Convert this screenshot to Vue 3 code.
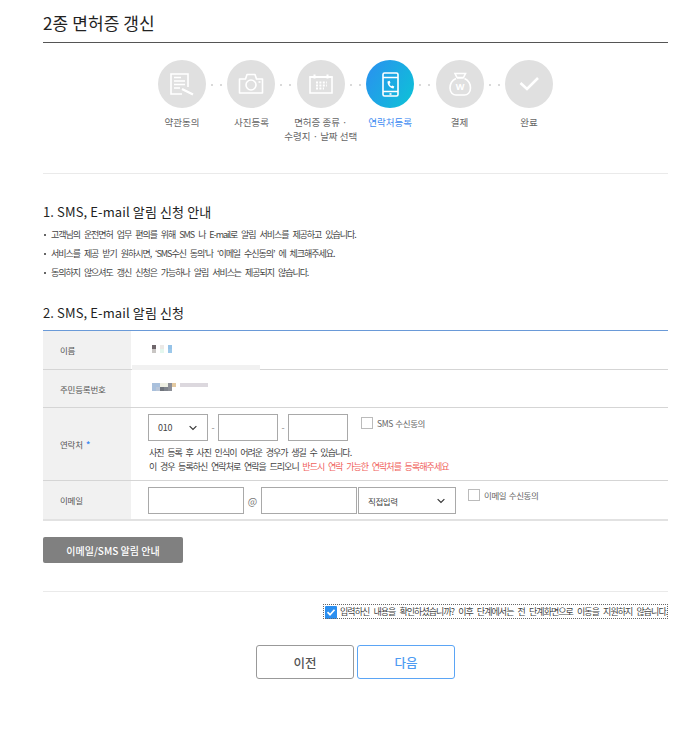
<script setup>
const steps = [
  { label: ['약관동의'], icon: 'doc' },
  { label: ['사진등록'], icon: 'cam' },
  { label: ['면허증 종류 ·', '수령지 · 날짜 선택'], icon: 'cal' },
  { label: ['연락처등록'], icon: 'phone', active: true },
  { label: ['결제'], icon: 'bag' },
  { label: ['완료'], icon: 'check' },
]
const notices = [
  '고객님의 운전면허 업무 편의를 위해 SMS 나 E-mail로 알림 서비스를 제공하고 있습니다.',
  '서비스를 제공 받기 원하시면, ‘SMS수신 동의’나 ‘이메일 수신동의’ 에 체크해주세요.',
  '동의하지 않으셔도 갱신 신청은 가능하나 알림 서비스는 제공되지 않습니다.',
]
const nameBlocks = ['#6f666b', '#fff', '#ece9e6', '#fff', '#96c3e8', '#c9c6c4', '#fff', '#e4f7ee', '#fff', '#9cc8ea']
const idBlocks = ['#a9c0dc', '#a9c0dc', '#eeeee2', '#eef0e4', '#8d8f98', '#e3c9a0', '#a9c0dc', '#b9c6d8', '#6f747c', '#7f848c', '#8d9097', '#fff']
</script>

<template>
  <div class="page">
    <h1 class="title">2종 면허증 갱신</h1>

    <ol class="steps">
      <li v-for="(s, i) in steps" :key="i" class="step" :class="{ active: s.active }">
        <span class="circle">
          <svg viewBox="0 0 48 48" width="48" height="48" fill="none" stroke="#fff" stroke-width="1.600">
            <template v-if="s.icon === 'doc'">
              <path d="M30 27V14H13v20h11" />
              <path d="M16 17.500h7M16 21h11M16 24.500h11M16 28h6" />
              <path d="M24 29l11 5.500" stroke-width="2.200" />
            </template>
            <template v-else-if="s.icon === 'cam'">
              <path d="M12.500 19h6l1.500-4.500h8l1.500 4.500h6v14h-23z" stroke-linejoin="round" />
              <circle cx="24" cy="25" r="5" />
              <path d="M31.500 22h2" />
            </template>
            <template v-else-if="s.icon === 'cal'">
              <path d="M13 17h22v16H13z" />
              <path d="M12.500 17h23M17.500 14.500v4M30.500 14.500v4" stroke-width="2" />
              <path d="M19 22.500h11M19 25.500h11M19 28.500h8" stroke-width="2" stroke-dasharray="2 1.400" />
            </template>
            <template v-else-if="s.icon === 'phone'">
              <rect x="17" y="13" width="15" height="23" rx="1.500" />
              <path d="M17 17.500h15M17 31.500h15" />
              <path d="M21.500 21.500c0 4 2.500 6.500 6 7l.8-2-2-1-1 .8c-1-.6-1.500-1.400-1.800-2.500l1-.8-.8-2.200z" fill="#fff" stroke="none" />
              <path d="M23.500 34h2" />
            </template>
            <template v-else-if="s.icon === 'bag'">
              <path d="M19 13.500h10.500l-2 4h-6.500zM21 18h6.500" />
              <path d="M20 18.500c-4 2-6 5.500-6 9.500 0 4.500 3 7 6 7h8.500c3 0 6-2.500 6-7 0-4-2-7.500-6-9.500" />
              <text x="24.200" y="30" class="won" text-anchor="middle" fill="#fff" stroke="none">W</text>
            </template>
            <template v-else>
              <path d="M15.500 23l6.500 6L33 18" stroke-width="2.600" />
            </template>
          </svg>
        </span>
        <span class="step-label">
          <span v-for="l in s.label" :key="l" class="step-line">{{ l }}</span>
        </span>
        <span v-if="i < steps.length - 1" class="dots"><i></i><i></i></span>
      </li>
    </ol>

    <hr class="soft" />

    <h2 class="heading first">1. SMS, E-mail 알림 신청 안내</h2>
    <ul class="notices">
      <li v-for="n in notices" :key="n">{{ n }}</li>
    </ul>

    <h2 class="heading second">2. SMS, E-mail 알림 신청</h2>

    <div class="form">
      <div class="row r-name">
        <div class="th">이름</div>
        <div class="td">
          <span class="mosaic m-name">
            <i v-for="(c, k) in nameBlocks" :key="k" :style="{ background: c }"></i>
          </span>
          <span class="gap-line"></span>
        </div>
      </div>
      <div class="row r-id">
        <div class="th">주민등록번호</div>
        <div class="td">
          <span class="mosaic m-id">
            <i v-for="(c, k) in idBlocks" :key="k" :style="{ background: c }"></i>
          </span>
          <span class="blur-bar"></span>
        </div>
      </div>
      <div class="row r-phone">
        <div class="th">연락처 <b>*</b></div>
        <div class="td column">
          <div class="controls">
            <span class="select s-phone">010<svg viewBox="0 0 12 8" width="10" height="6"><path d="M1.500 1.500 6 6l4.500-4.500" fill="none" stroke="#333" stroke-width="1.500" /></svg></span>
            <span class="dash">-</span>
            <span class="input s-tel"></span>
            <span class="dash">-</span>
            <span class="input s-tel"></span>
            <label class="agree sms"><span class="box"></span>SMS 수신동의</label>
          </div>
          <p class="hint first-hint">사진 등록 후 사진 인식이 어려운 경우가 생길 수 있습니다.</p>
          <p class="hint">이 경우 등록하신 연락처로 연락을 드리오니 <em>반드시 연락 가능한 연락처를 등록해주세요</em></p>
        </div>
      </div>
      <div class="row r-mail">
        <div class="th">이메일</div>
        <div class="td">
          <div class="controls">
            <span class="input s-mail1"></span>
            <span class="at">@</span>
            <span class="input s-mail2"></span>
            <span class="select s-domain">직접입력<svg viewBox="0 0 12 8" width="10" height="6"><path d="M1.500 1.500 6 6l4.500-4.500" fill="none" stroke="#333" stroke-width="1.500" /></svg></span>
            <label class="agree mail"><span class="box"></span>이메일 수신동의</label>
          </div>
        </div>
      </div>
    </div>

    <button class="guide" type="button">이메일/SMS 알림 안내</button>

    <hr class="soft lower" />

    <div class="confirm-wrap">
      <label class="confirm">
        <span class="tick"><svg viewBox="0 0 12 12" width="12" height="12"><path d="M2.500 6.200 5 8.700l4.500-5" fill="none" stroke="#fff" stroke-width="1.700" /></svg></span>
        <span class="confirm-text">입력하신 내용을 확인하셨습니까? 이후 단계에서는 전 단계화면으로 이동을 지원하지 않습니다.</span>
      </label>
    </div>

    <div class="actions">
      <button class="btn prev" type="button">이전</button>
      <button class="btn next" type="button">다음</button>
    </div>
  </div>
</template>

<style>
html, body { margin: 0; background: #fff; }
</style>

<style scoped>
.page {
  width: 625px;
  height: 729px;
  box-sizing: border-box;
  margin-left: 43px;
  padding-top: 12px;
  font-family: "Noto Sans CJK KR", "Noto Sans", sans-serif;
  color: #333;
  overflow: hidden;
}
.title {
  margin: 0;
  height: 30px;
  border-bottom: 1px solid #555;
  font-size: 17px;
  letter-spacing: .1px;
  line-height: 21px;
  font-weight: 400;
  color: #222;
}
.steps {
  list-style: none;
  margin: 17px 0 0 115px;
  padding: 0;
  display: flex;
  height: 113px;
}
.step {
  position: relative;
  width: 48px;
  margin-right: 21.400px;
  display: flex;
  flex-direction: column;
  align-items: center;
}
.circle {
  width: 48px;
  height: 48px;
  border-radius: 50%;
  background: #e0e0e0;
  flex: none;
}
.circle svg { display: block; }
.won { font-size: 9px; font-weight: 700; font-family: "Noto Sans", sans-serif; }
.active .circle { background: linear-gradient(120deg, #2b8ff0, #0cc4d6); }
.step-label {
  margin-top: 7px;
  width: 90px;
  display: flex;
  flex-direction: column;
  align-items: center;
  font-size: 9.500px;
  line-height: 14px;
  color: #666;
  white-space: nowrap;
}
.step-line { display: block; }
.active .step-label { color: #3d8bf2; }
.dots {
  position: absolute;
  left: 53px;
  top: 24px;
  display: flex;
  gap: 7px;
}
.dots i {
  width: 2px;
  height: 2px;
  border-radius: 50%;
  background: #ccc;
}
.soft {
  margin: 0;
  border: 0;
  border-top: 1px solid #eaeaea;
}
.heading {
  margin: 0;
  font-size: 13px;
  letter-spacing: .12px;
  line-height: 18px;
  font-weight: 400;
  color: #222;
}
.heading.first { margin-top: 29px; }
.heading.second { margin-top: 22px; }
.notices {
  list-style: none;
  margin: 4px 0 0;
  padding: 0;
}
.notices li {
  position: relative;
  padding-left: 8px;
  font-size: 9px;
  letter-spacing: -1.050px;
  word-spacing: 3px;
  line-height: 19px;
  color: #444;
  white-space: nowrap;
}
.notices li::before {
  content: "";
  position: absolute;
  left: 1px;
  top: 9px;
  width: 2px;
  height: 2px;
  background: #666;
}
.form {
  margin-top: 8px;
  border-top: 1px solid #6a9ad8;
  border-bottom: 2px solid #e2e2e2;
}
.row {
  display: flex;
  border-bottom: 1px solid #d5d5d5;
}
.row:last-child { border-bottom: 0; }
.r-name { height: 38px; }
.r-id { height: 37px; }
.r-phone { height: 72px; }
.r-mail { height: 38px; }
.th {
  flex: none;
  width: 88px;
  box-sizing: border-box;
  padding-left: 17px;
  background: #f1f1f1;
  display: flex;
  align-items: center;
  gap: 3px;
  font-size: 8.500px;
  letter-spacing: -.2px;
  color: #555;
}
.th b { color: #3d8bf2; font-weight: 700; }
.td {
  position: relative;
  flex: 1;
  box-sizing: border-box;
  padding-left: 17px;
  display: flex;
  align-items: center;
}
.td.column {
  flex-direction: column;
  align-items: flex-start;
  justify-content: flex-start;
  padding-top: 6px;
}
.mosaic {
  display: grid;
  grid-auto-rows: 4px;
  margin: -3px 0 0 4px;
}
.mosaic i { display: block; }
.m-name { grid-template-columns: repeat(5, 4px); }
.m-id { grid-template-columns: repeat(6, 4px); }
.blur-bar {
  width: 28px;
  height: 4px;
  margin: -7px 0 0 4px;
  background: #dcd8de;
}
.gap-line {
  position: absolute;
  left: 1px;
  bottom: -1px;
  width: 128px;
  height: 5px;
  background: #f1f1f1;
}
.controls {
  display: flex;
  align-items: flex-start;
}
.r-mail .controls { margin-top: 1px; }
.input, .select {
  display: flex;
  flex: none;
  align-items: center;
  justify-content: space-between;
  box-sizing: border-box;
  height: 27px;
  border: 1px solid #a9a9a9;
  background: #fff;
}
.select {
  padding: 0 9px;
  font-size: 9px;
  letter-spacing: -.2px;
  color: #444;
}
.s-phone { width: 60px; }
.s-tel { width: 60px; }
.s-mail1 { width: 96px; }
.s-mail2 { width: 96px; }
.s-domain { width: 98px; margin-left: 1px; font-size: 8.500px; letter-spacing: -.4px; }
.dash {
  width: 10px;
  text-align: center;
  font-size: 9px;
  line-height: 27px;
  color: #888;
}
.at {
  width: 17px;
  text-align: center;
  font-size: 10px;
  line-height: 27px;
  color: #777;
}
.agree {
  display: flex;
  align-items: center;
  gap: 4px;
  font-size: 8.500px;
  letter-spacing: -.4px;
  word-spacing: 1px;
  line-height: 12px;
  color: #666;
  white-space: nowrap;
}
.agree.sms { margin: 3px 0 0 13px; }
.agree.mail { margin: 2px 0 0 12px; }
.box {
  width: 10px;
  height: 10px;
  border: 1px solid #bbb;
  display: block;
}
.hint {
  margin: 0;
  padding-left: 1px;
  font-size: 9px;
  letter-spacing: -.95px;
  word-spacing: 2.500px;
  line-height: 14px;
  color: #444;
  white-space: nowrap;
}
.first-hint { margin-top: 5px; }
.hint em { font-style: normal; color: #f0625c; }
.guide {
  display: block;
  margin-top: 16px;
  width: 140px;
  height: 26px;
  padding: 0;
  border: 0;
  border-radius: 2px;
  background: #808080;
  color: #fff;
  font-family: inherit;
  font-size: 10px;
  font-weight: 500;
}
.lower { margin-top: 28px; }
.confirm-wrap {
  margin-top: 12px;
  display: flex;
  justify-content: flex-end;
}
.confirm {
  display: flex;
  align-items: center;
  gap: 3px;
  height: 15px;
  width: 345px;
  box-sizing: border-box;
  outline: 1px dotted #666;
  outline-offset: -1px;
  padding-left: 2px;
  font-size: 9px;
  letter-spacing: -.95px;
  word-spacing: 3px;
  color: #444;
  white-space: nowrap;
}
.tick {
  flex: none;
  width: 12px;
  height: 13px;
  margin-top: 2px;
  border-radius: 1px;
  background: #2b8ff0;
  display: block;
}
.tick svg { display: block; }
.actions {
  margin-top: 26px;
  padding-left: 213px;
  display: flex;
  gap: 3px;
}
.btn {
  width: 98px;
  height: 34px;
  padding: 0;
  border-radius: 3px;
  background: #fff;
  font-family: inherit;
  font-size: 12.500px;
  font-weight: 500;
}
.prev { border: 1px solid #999; color: #555; }
.next { border: 1px solid #5ba5f5; color: #4d9bf2; }
</style>
